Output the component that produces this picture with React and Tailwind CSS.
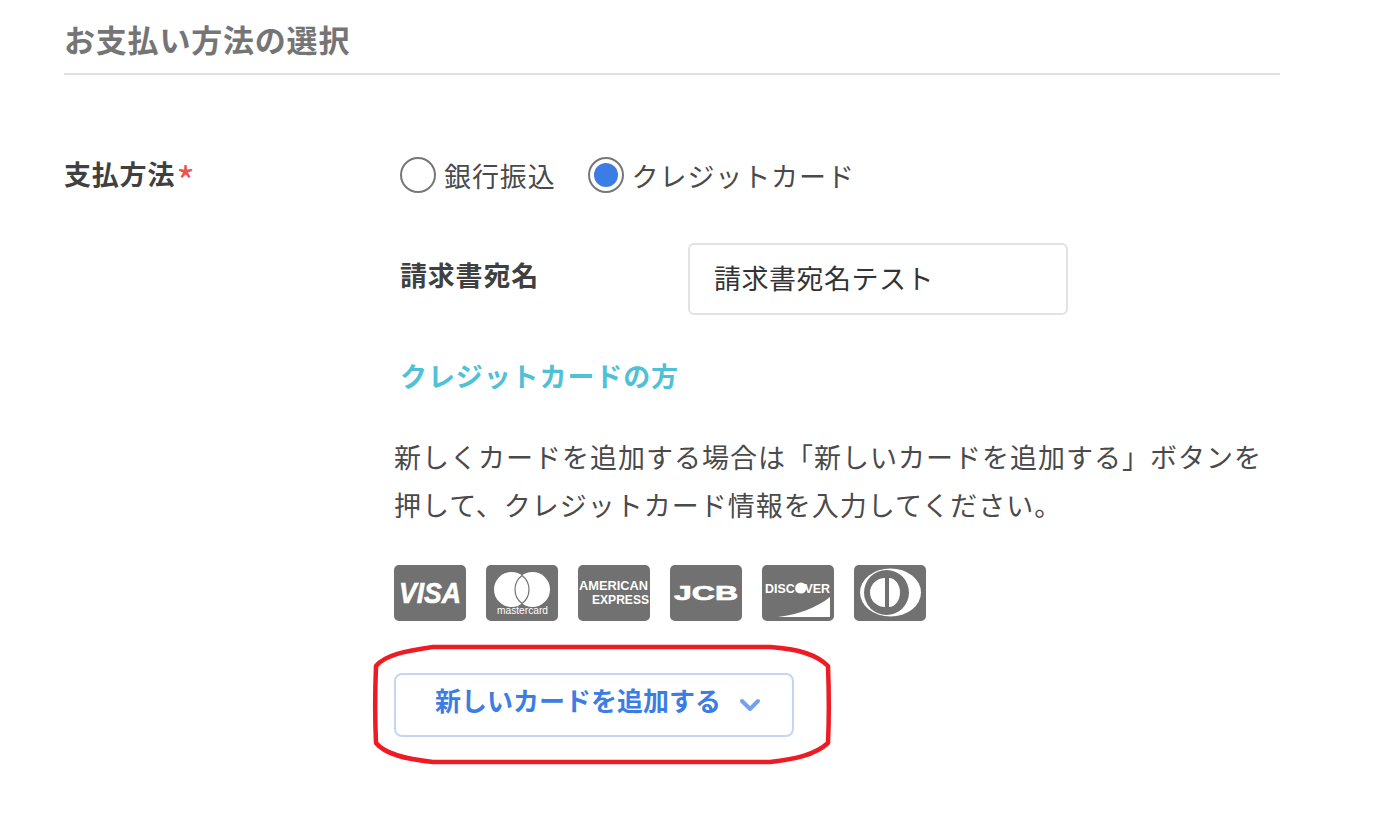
import { ChevronDown } from 'lucide-react'

const FONT = { fontFamily: '"Noto Sans CJK JP", "Noto Sans", sans-serif' }

function CardIcon({ children }) {
  return (
    <svg width="72" height="56" viewBox="0 0 72 56" className="shrink-0">
      <rect width="72" height="56" rx="5" fill="#717171" />
      {children}
    </svg>
  )
}

const LOGO_TEXT = { fontFamily: '"Liberation Sans", sans-serif', fill: '#fff' }

export default function App() {
  return (
    <div className="relative h-[814px] w-[1382px] overflow-hidden bg-white" style={FONT}>
      <div className="ml-16 w-[1216px]">
        <h2 className="flex h-[75px] items-center border-b-2 border-[#e0e0e0] pt-[3px] text-[31px] font-bold leading-none tracking-[0.8px] text-[#757575]">
          お支払い方法の選択
        </h2>

        <div className="mt-[82px] flex">
          <div className="flex w-[330px] shrink-0 items-start text-[27px] font-bold leading-[34px] tracking-[0.8px] text-[#404040]">
            支払方法<span className="ml-[1px] mt-[5px] text-[40px] font-normal leading-[36px] text-[#ef5350]">*</span>
          </div>

          <div className="w-[886px]">
            <div className="flex h-[36px] items-center pl-[6px] text-[27px] leading-none tracking-[0.9px] text-[#4a4a4a]">
              <span className="h-[36px] w-[36px] rounded-full border-2 border-[#777777]" />
              <span className="ml-[8px]">銀行振込</span>
              <span className="ml-[32px] flex h-[36px] w-[36px] items-center justify-center rounded-full border-2 border-[#777777]">
                <span className="h-[24px] w-[24px] rounded-full bg-[#3b7de4]" />
              </span>
              <span className="ml-[8px]">クレジットカード</span>
            </div>

            <div className="mt-[50px] flex items-center pl-[6px]">
              <div className="w-[288px] pb-[8px] text-[27px] font-bold tracking-[0.8px] text-[#404040]">請求書宛名</div>
              <div className="flex h-[72px] w-[380px] items-center rounded-md border-2 border-[#e2e2e2] pb-[2px] pl-[24px] text-[27px] tracking-[0.5px] text-[#333333]">
                請求書宛名テスト
              </div>
            </div>

            <div className="mt-[38px] pl-[6px] text-[27px] font-bold leading-[46px] tracking-[0.9px] text-[#4fc1d6]">
              クレジットカードの方
            </div>

            <p className="mt-[34px] whitespace-nowrap text-[27px] leading-[48px] tracking-[1px] text-[#4a4a4a]">
              新しくカードを追加する場合は「新しいカードを追加する」ボタンを
              <br />
              押して、クレジットカード情報を入力してください。
            </p>

            <div className="mt-[36px] flex gap-5">
              <CardIcon>
                <text x="36" y="38" textAnchor="middle" fontSize="29" fontWeight="700" fontStyle="italic" textLength="62" lengthAdjust="spacingAndGlyphs" stroke="#fff" strokeWidth="0.6" style={LOGO_TEXT}>VISA</text>
              </CardIcon>
              <CardIcon>
                <circle cx="25.5" cy="24.5" r="17.5" fill="#fff" />
                <circle cx="46.5" cy="24.5" r="17.5" fill="#fff" />
                <path d="M36 10.5A17.5 17.5 0 0 1 36 38.5A17.5 17.5 0 0 1 36 10.5z" fill="#fff" stroke="#717171" strokeWidth="1.2" />
                <text x="36.5" y="49" textAnchor="middle" fontSize="10.5" textLength="51" lengthAdjust="spacingAndGlyphs" style={LOGO_TEXT}>mastercard</text>
              </CardIcon>
              <CardIcon>
                <text x="1" y="25" fontSize="13" fontWeight="700" textLength="69" lengthAdjust="spacingAndGlyphs" style={LOGO_TEXT}>AMERICAN</text>
                <text x="14" y="39" fontSize="12" fontWeight="700" textLength="57" lengthAdjust="spacingAndGlyphs" style={LOGO_TEXT}>EXPRESS</text>
              </CardIcon>
              <CardIcon>
                <text x="36" y="35" textAnchor="middle" fontSize="20" fontWeight="700" textLength="64" lengthAdjust="spacingAndGlyphs" stroke="#fff" strokeWidth="0.7" style={LOGO_TEXT}>JCB</text>
              </CardIcon>
              <CardIcon>
                <text x="35.5" y="28" textAnchor="middle" fontSize="13" fontWeight="700" textLength="65" lengthAdjust="spacingAndGlyphs" style={LOGO_TEXT}>DISCOVER</text>
                <circle cx="39" cy="23" r="5.5" fill="#fff" />
                <path d="M16 52C38 49 54 43 68 32V52z" fill="#fff" />
              </CardIcon>
              <CardIcon>
                <ellipse cx="36.5" cy="27.5" rx="30.5" ry="24" fill="#fff" />
                <circle cx="32.5" cy="27.5" r="22.5" fill="#717171" />
                <path d="M31 13A15 14.5 0 0 0 31 42zM35 13A11 14.5 0 0 1 35 42z" fill="#fff" />
              </CardIcon>
            </div>

            <button className="mt-[52px] flex h-[64px] w-[400px] items-center rounded-lg border-2 border-[#c3d7f5] bg-white pb-[12px] pl-[39px] text-[26px] font-bold text-[#3b7de4]">
              新しいカードを追加する
              <ChevronDown size={32} strokeWidth={3} className="ml-[13px] mt-[12px] text-[#75a1ec]" />
            </button>
          </div>
        </div>
      </div>

      {/* red marker drawn over the button */}
      <svg className="pointer-events-none absolute left-[370px] top-[642px]" width="465" height="126" viewBox="0 0 465 126" fill="none">
        <path
          d="M63 5H400C430 7 447 13 458 24C459 50 459 80 458 101C445 113 425 117 400 120H63C35 117 15 112 6 101C5 80 5 50 6 24C15 13 35 9 63 5Z"
          stroke="#ed1c24"
          strokeWidth="4.5"
          strokeLinejoin="round"
        />
      </svg>
    </div>
  )
}
